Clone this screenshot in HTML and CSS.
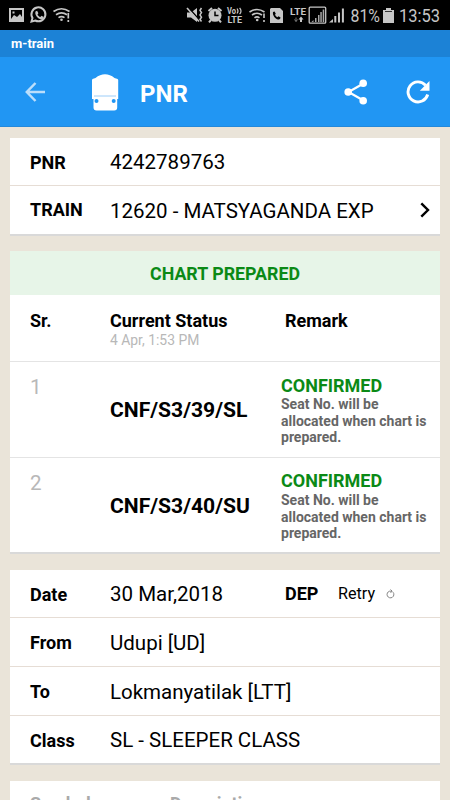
FILE: index.html
```html
<!DOCTYPE html>
<html lang="en">
<head>
<meta charset="UTF-8">
<meta name="viewport" content="width=device-width, initial-scale=1.0">
<title>m-train</title>
<link rel="stylesheet" href="styles.css">
</head>
<body>

<!-- Phone status bar -->
<div class="status-bar">
  <svg class="notifications" width="64" height="30" viewBox="8 0 64 30">
    <!-- picture -->
    <path fill="#c6c6c6" fill-rule="evenodd" d="M9 8h15v14H9zM11 10v9l3-4 3 2 3-3 2 3v-7zM12.500 11.500h2v2h-2z"/>
    <!-- chat -->
    <path fill="none" stroke="#c6c6c6" stroke-width="2" d="M31.500 21.600l1-3.600a7 7 0 1 1 2.700 2.500z"/>
    <path fill="#c6c6c6" d="M35.500 11.500l1.600-.7 1.300 2.400-.9 1.200c.7 1.300 1.600 2.100 2.800 2.600l1.200-1.200 2.200 1.200c-.2 2-1.500 2.500-3.200 2.200-3-.7-6-4.600-5-7.700z"/>
    <!-- wifi -->
    <g fill="none" stroke="#c6c6c6" stroke-width="1.700">
      <path d="M53.500 11.500q8-5.500 16 0M56 14.700q5.500-3.800 11 0M58.500 17.600q3-2 6 0"/>
      <path d="M68.300 13v5.500M68.300 20v2"/>
    </g>
    <circle cx="61.500" cy="19.800" r="1.300" fill="#c6c6c6"/>
  </svg>

  <svg class="system" width="264" height="30" viewBox="184 0 264 30">
    <g fill="#c6c6c6">
      <!-- mute + vibrate -->
      <path d="M187 12.500h4l6-4.500v14l-6-4.500h-4z"/>
      <path d="M188 7l11 12.500" stroke="#000" stroke-width="1.500"/>
      <path d="M187 8l12 13.500" stroke="#c6c6c6" stroke-width="1.600"/>
      <path d="M201.500 8l-1.500 2.300 1.500 2.300-1.500 2.300 1.500 2.300-1.500 2.300 1.500 2" fill="none" stroke="#c6c6c6" stroke-width="1.500"/>
      <!-- alarm -->
      <circle cx="215" cy="15.300" r="6.500"/>
      <path d="M208.500 11l3.500-3M221.500 11l-3.500-3M211 20l-2 2.300M219 20l2 2.300" stroke="#c6c6c6" stroke-width="2"/>
      <path d="M215 11.500v4h3.500" fill="none" stroke="#000" stroke-width="1.500"/>
      <text x="227" y="14" class="tiny" textLength="9" lengthAdjust="spacingAndGlyphs">Vo</text>
      <path d="M237 8.500q2 2.500 0 5M239.600 7.800q2.800 3.200 0 6.400" fill="none" stroke="#c6c6c6" stroke-width="1.200"/>
      <text x="227.500" y="22.800" class="tiny" textLength="14.500" lengthAdjust="spacingAndGlyphs">LTE</text>
      <!-- wifi -->
      <path d="M249.500 12q7.500-5 15 0M252 15q5-3.500 10 0M254.500 17.800q2.500-1.800 5 0M264 13.500v4.500M264 20v2" fill="none" stroke="#c6c6c6" stroke-width="1.600"/>
      <circle cx="257.200" cy="20" r="1.300"/>
      <!-- sim card with phone -->
      <path d="M271 8h9l3 3v12h-13V9z"/>
      <path d="M273 12l1.600-.6 1.200 2.300-.8 1c.5 1.200 1.300 2 2.400 2.500l1.100-.9 2 1.300c-.1 1.500-1 2.200-2.400 1.900-3-.6-5.800-4.400-5.100-7.500z" fill="#000"/>
      <text x="290" y="15" class="tiny" textLength="16" lengthAdjust="spacingAndGlyphs">LTE</text>
      <path d="M296 17.500v4M294.500 19.500l1.500 2 1.500-2" fill="none" stroke="#777" stroke-width="1"/>
      <path d="M300 22v-2.500h-1.500l2.500-3 2.500 3H302V22z"/>
      <!-- signal, boxed and plain -->
      <rect x="309.200" y="7.200" width="16.500" height="16" rx="1" fill="none" stroke="#c6c6c6" stroke-width="1.300"/>
      <path d="M311.500 22l2-2v2zM315 22v-4h1.500v4zM318 22v-7h1.500v7zM320.300 22v-10h1.500v10zM322.700 22V9.500h1.500V22z" fill="#a8a8a8"/>
      <path d="M329 22.500l4-3.500v3.500zM334.300 22.500v-6.500h2v6.500zM338 22.500v-10h2v10zM341.900 22.500V8.500h2v14z"/>
      <text x="350.500" y="22.300" class="clock" textLength="29.500" lengthAdjust="spacingAndGlyphs">81%</text>
      <!-- battery -->
      <path d="M386 8h5v2h3v13h-11V10h3z"/>
      <path d="M385 11.500h7" stroke="#333" stroke-width="1"/>
      <text x="399" y="22.300" class="clock" textLength="41" lengthAdjust="spacingAndGlyphs">13:53</text>
    </g>
  </svg>
</div>

<div class="app-name">m-train</div>

<!-- Toolbar -->
<div class="toolbar">
  <svg class="back" width="22" height="22" viewBox="0 0 22 22">
    <path d="M21 11H3M11.500 2L2.800 11l8.700 9" fill="none" stroke="#bbdefb" stroke-width="2.500"/>
  </svg>
  <svg class="train" width="28" height="38" viewBox="0 0 28 38">
    <path fill="#fff" d="M1 7q0-1.500 2-1.500l1.500-.5Q9 1.300 14 1.300t9.500 3.700l1.500.5q2.200 0 2.200 1.500V26h-1v8.500q0 3-3 3H5.500q-3 0-3-3V26H1z"/>
    <path d="M3 23h22" stroke="#9ccdf8" stroke-width="1"/>
    <circle cx="5.500" cy="28" r="2" fill="#2196f3"/>
    <circle cx="22.700" cy="28" r="2" fill="#2196f3"/>
  </svg>
  <h1>PNR</h1>
  <svg class="share" width="24" height="26" viewBox="0 0 24 26">
    <path d="M19.500 4.500L4.500 13l15 8.500" fill="none" stroke="#fff" stroke-width="2.200"/>
    <g fill="#fff"><circle cx="19.200" cy="4.300" r="3.800"/><circle cx="4.200" cy="13" r="3.800"/><circle cx="19.200" cy="21.700" r="3.800"/></g>
  </svg>
  <svg class="refresh" width="24" height="24" viewBox="0 0 24 24">
    <path d="M19.500 5.200A10 10 0 1 0 21.700 14.500" fill="none" stroke="#fff" stroke-width="2.900"/>
    <path fill="#fff" d="M23.500 1v9.700h-9.700z"/>
  </svg>
</div>

<div class="content">
  <div class="card">
    <div class="row first"><span class="label">PNR</span><span class="value">4242789763</span></div>
    <div class="row train-row">
      <span class="label">TRAIN</span><span class="value">12620 - MATSYAGANDA EXP</span>
      <svg class="chevron" width="10" height="16" viewBox="0 0 10 16"><path d="M1.300 1.300L8 8l-6.700 6.700" fill="none" stroke="#000" stroke-width="2.400"/></svg>
    </div>
  </div>

  <div class="card passengers">
    <div class="chart">CHART PREPARED</div>
    <div class="grid head">
      <div>Sr.</div>
      <div>Current Status<div class="time">4 Apr, 1:53 PM</div></div>
      <div class="remark-head">Remark</div>
    </div>
    <div class="grid passenger">
      <div class="sr">1</div>
      <div class="seat">CNF/S3/39/SL</div>
      <div class="remark"><div class="confirmed">CONFIRMED</div>Seat No. will be<br>allocated when chart is<br>prepared.</div>
    </div>
    <div class="grid passenger">
      <div class="sr">2</div>
      <div class="seat">CNF/S3/40/SU</div>
      <div class="remark"><div class="confirmed">CONFIRMED</div>Seat No. will be<br>allocated when chart is<br>prepared.</div>
    </div>
  </div>

  <div class="card journey">
    <div class="row">
      <span class="label">Date</span><span class="value date">30 Mar,2018</span>
      <span class="dep">DEP</span><span class="retry">Retry</span>
      <svg width="9" height="10" viewBox="0 0 9 10"><path d="M7 3.200A3.400 3.400 0 1 1 3.500 2.200H6M4.500.5L6.200 2.200 4.500 3.900" fill="none" stroke="#777" stroke-width=".9"/></svg>
    </div>
    <div class="row"><span class="label">From</span><span class="value">Udupi [UD]</span></div>
    <div class="row"><span class="label">To</span><span class="value">Lokmanyatilak [LTT]</span></div>
    <div class="row"><span class="label">Class</span><span class="value">SL - SLEEPER CLASS</span></div>
  </div>

  <div class="card legend">
    <span class="symbol">Symbol</span><span>Description</span>
  </div>
</div>

</body>
</html>
```
FILE: styles.css
```css
body {
  margin: 0;
  height: 800px;
  overflow: hidden;
  display: flex;
  flex-direction: column;
  font-family: Roboto, "Liberation Sans", sans-serif;
  background-color: #eae4d9;
  color: #000;
}
svg {
  display: block;
  flex: none;
}
.status-bar {
  height: 30px;
  flex: none;
  display: flex;
  justify-content: space-between;
  padding: 0 2px 0 8px;
  background-color: #000;
}
.tiny {
  font-size: 8.2px;
  font-weight: 700;
}
.clock {
  font-size: 18.7px;
}
.app-name {
  height: 27px;
  line-height: 28px;
  flex: none;
  padding-left: 11px;
  background-color: #1c82d6;
  color: #fff;
  font-size: 13px;
  font-weight: 700;
}
.toolbar {
  height: 70px;
  flex: none;
  display: flex;
  align-items: center;
  box-sizing: border-box;
  padding: 1px 20px 0 24px;
  border-bottom: 1px solid #2489db;
  background-color: #2196f3;
}
.train {
  margin-left: 45px;
}
h1 {
  margin: 3px 0 0 21px;
  color: #fff;
  font-size: 24px;
  line-height: 28px;
  font-weight: 700;
}
.share {
  margin-left: auto;
}
.refresh {
  margin-left: 38px;
}
.content {
  flex: 1;
  min-height: 0;
  overflow: hidden;
  padding: 11px 10px 0;
}
.card {
  background-color: #fff;
  border-bottom: 2px solid #d9d9d9;
  margin-bottom: 15px;
}
.row {
  height: 49px;
  display: flex;
  align-items: center;
  box-sizing: border-box;
  padding-left: 20px;
  border-top: 1px solid #e6ddd5;
}
.row.first,
.journey .row:first-child {
  height: 47px;
  border-top: none;
}
.label {
  width: 80px;
  padding-top: 1px;
  font-size: 18px;
  font-weight: 700;
}
.value {
  padding-top: 1px;
  font-size: 20.5px;
  line-height: 26px;
}
.train-row .label {
  padding: 0 0 2px;
}
.chevron {
  margin-left: auto;
  margin-right: 10px;
}
.chart {
  height: 44px;
  line-height: 46px;
  background-color: #e7f5e8;
  color: #0b8a16;
  text-align: center;
  font-size: 17.8px;
  font-weight: 700;
}
.grid {
  display: grid;
  grid-template-columns: 80px 171px 1fr;
  box-sizing: border-box;
  padding-left: 20px;
}
.head {
  height: 66px;
  padding-top: 15px;
  font-size: 18px;
  line-height: 22px;
  font-weight: 700;
}
.time {
  color: #b8b8b8;
  font-size: 13.9px;
  line-height: 16px;
  font-weight: 400;
}
.remark-head {
  padding-left: 4px;
}
.passenger {
  height: 96px;
  border-top: 1px solid #e4e4e4;
}
.passenger:last-child {
  height: 95px;
}
.sr {
  padding-top: 12px;
  color: #b8b8b8;
  font-size: 20.6px;
  line-height: 26px;
}
.seat {
  padding-top: 35px;
  font-size: 21.1px;
  line-height: 26px;
  font-weight: 700;
}
.remark {
  padding-top: 13px;
  color: #666;
  font-size: 14px;
  line-height: 16.7px;
  font-weight: 700;
}
.confirmed {
  color: #0b8a16;
  font-size: 18px;
  line-height: 21px;
}
.passenger:last-child .remark {
  padding-top: 12px;
}
.passenger:last-child .confirmed {
  padding-bottom: 1px;
}
.passengers,
.journey {
  margin-bottom: 16px;
}
.journey .row:last-child {
  height: 48px;
}
.date {
  width: 175px;
}
.dep {
  width: 53px;
  font-size: 18px;
  font-weight: 700;
}
.retry {
  width: 48px;
  font-size: 16.2px;
}
.legend {
  display: flex;
  height: 60px;
  padding: 12px 0 0 20px;
  color: #aaa;
  font-size: 18px;
  line-height: 22px;
  font-weight: 700;
}
.symbol {
  width: 140px;
}
```
